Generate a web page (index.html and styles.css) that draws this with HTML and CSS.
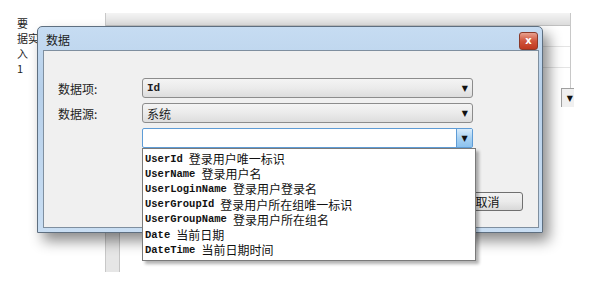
FILE: index.html
```html
<!DOCTYPE html>
<html lang="zh">
<head>
    <meta charset="UTF-8">
    <title>数据</title>
    <link rel="stylesheet" href="styles.css">
</head>
<body>
    <div class="side-text">
        <div>要</div>
        <div>据实</div>
        <div>入</div>
        <div>1</div>
    </div>

    <!-- finestra dietro il dialogo -->
    <div class="bg-window">
        <div class="bg-top">
            <div class="bg-header"></div>
            <div class="bg-row"></div>
            <div class="bg-row"></div>
        </div>
        <div class="bg-combo"><span class="arrow">&#9660;</span></div>
        <div class="bg-strip"></div>
    </div>

    <div class="dialog">
        <div class="title-bar">
            <span class="title">数据</span>
            <span class="close-btn">x</span>
        </div>
        <div class="client">
            <div class="form-row">
                <span class="label">数据项:</span>
                <div class="select"><span class="mono">Id</span><span class="arrow">&#9660;</span></div>
            </div>
            <div class="form-row">
                <span class="label">数据源:</span>
                <div class="select">系统<span class="arrow">&#9660;</span></div>
            </div>
            <div class="form-row">
                <span class="label"></span>
                <div class="combo"><span class="combo-btn"><span class="arrow">&#9660;</span></span></div>
            </div>
            <div class="buttons">
                <button class="btn">确定</button>
                <button class="btn">取消</button>
            </div>

            <ul class="drop-list">
                <li><b>UserId</b><span>登录用户唯一标识</span></li>
                <li><b>UserName</b><span>登录用户名</span></li>
                <li><b>UserLoginName</b><span>登录用户登录名</span></li>
                <li><b>UserGroupId</b><span>登录用户所在组唯一标识</span></li>
                <li><b>UserGroupName</b><span>登录用户所在组名</span></li>
                <li><b>Date</b><span>当前日期</span></li>
                <li><b>DateTime</b><span>当前日期时间</span></li>
            </ul>
        </div>
    </div>
</body>
</html>
```

FILE: styles.css
```css
html, body {
    margin: 0;
    padding: 0;
    background: #ffffff;
    font-family: "Noto Sans CJK SC", "Liberation Sans", sans-serif;
    font-size: 12px;
    color: #1e1e1e;
    overflow: hidden;
    height: 286px;
}

body {
    position: relative;
}

.side-text {
    padding: 16px 0 0 17px;
    font-size: 11px;
}

.side-text div {
    height: 15px;
    line-height: 15px;
}

/* finestra di sfondo */
.bg-window {
    position: absolute;
    left: 105px;
    top: 13px;
    width: 465px;
    height: 259px;
    border-left: 1px solid #c8c8c8;
}

.bg-top {
    border-right: 1px solid #c8c8c8;
    height: 75px;
}

.bg-header {
    height: 12px;
    background: linear-gradient(#f4f4f4, #dcdcdc);
    border-bottom: 1px solid #c0c0c0;
}

.bg-row {
    height: 20px;
    border-bottom: 1px solid #e4e4e4;
}

.bg-combo {
    position: absolute;
    top: 75px;
    left: 455px;
    width: 12px;
    height: 18px;
    border-top: 1px solid #a0a0a0;
    border-left: 1px solid #a0a0a0;
    background: #f0f0f0;
    display: flex;
    justify-content: flex-end;
    align-items: center;
}

.bg-combo .arrow {
    padding-right: 1px;
}

.bg-strip {
    position: absolute;
    left: 0;
    bottom: 0;
    width: 13px;
    height: 60px;
    background: #e6e6e6;
    border-right: 1px solid #c4c4c4;
}

/* dialogo */
.dialog {
    position: absolute;
    left: 37px;
    top: 26px;
    width: 504px;
    height: 205px;
    border: 1px solid #5e6f80;
    border-radius: 5px 5px 0 0;
    background: linear-gradient(#c6dcf2, #b7d0ea 30%, #c9def3);
    box-shadow: 6px 8px 14px rgba(0, 0, 0, 0.45);
    display: flex;
    flex-direction: column;
}

.title-bar {
    height: 23px;
    display: flex;
    align-items: center;
    justify-content: space-between;
    padding: 0 4px 0 8px;
}

.title {
    font-size: 12px;
    color: #1b1b1b;
    padding-top: 1px;
}

.close-btn {
    width: 17px;
    height: 16px;
    margin-top: 4px;
    border: 1px solid #8a3a2a;
    border-radius: 3px;
    background: linear-gradient(#e8a18e, #d0553c 50%, #c0381f);
    color: #ffffff;
    font-family: "DejaVu Sans", sans-serif;
    font-weight: bold;
    font-size: 10px;
    display: flex;
    justify-content: center;
    align-items: center;
    line-height: 1;
}

.client {
    flex: 1;
    margin: 0 3px 4px 5px;
    border: 1px solid #7f8f9f;
    background: #f0f0f0;
    position: relative;
    padding-top: 27px;
}

.form-row {
    display: flex;
    align-items: center;
    height: 20px;
    margin-bottom: 5px;
}

.label {
    width: 84px;
    padding-left: 14px;
}

.select, .combo {
    height: 18px;
    border: 1px solid #8c8c8c;
    border-radius: 3px;
    background: linear-gradient(#f4f4f4, #ebebeb 50%, #dddddd);
    display: flex;
    align-items: center;
    justify-content: space-between;
    padding-left: 4px;
    width: 325px;
}

.combo {
    background: #ffffff;
    border-color: #5e9cd6;
    border-radius: 2px;
    padding-left: 0;
    width: 329px;
    justify-content: flex-end;
}

.combo-btn {
    width: 15px;
    height: 18px;
    background: linear-gradient(#d9ecfb, #a9d2f3 50%, #8cc2ee);
    border-left: 1px solid #5e9cd6;
    display: flex;
    justify-content: center;
    align-items: center;
}

.mono {
    font-family: "Liberation Mono", monospace;
    font-weight: bold;
    font-size: 11px;
}

.arrow {
    font-size: 8px;
    color: #111111;
    padding-right: 4px;
    font-family: "DejaVu Sans", sans-serif;
}

.combo-btn .arrow {
    padding-right: 0;
}

.buttons {
    display: flex;
    justify-content: flex-end;
    gap: 8px;
    margin-top: 44px;
    padding-right: 15px;
}

.btn {
    width: 71px;
    height: 19px;
    border: 1px solid #707070;
    border-radius: 3px;
    background: linear-gradient(#f2f2f2, #ebebeb 50%, #d8d8d8);
    font-family: "Noto Sans CJK SC", sans-serif;
    font-size: 12px;
    padding: 0;
    line-height: 17px;
    color: #111111;
}

/* lista a tendina */
.drop-list {
    position: absolute;
    left: 98px;
    top: 97px;
    width: 330px;
    margin: 0;
    padding: 2px 0 3px 2px;
    list-style: none;
    background: #ffffff;
    border: 1px solid #7a7a7a;
    box-shadow: 3px 3px 3px rgba(0, 0, 0, 0.3);
}

.drop-list li {
    height: 15.2px;
    display: flex;
    align-items: center;
    gap: 6px;
    white-space: nowrap;
    color: #111111;
}

.drop-list b {
    font-family: "Liberation Mono", monospace;
    font-size: 10.5px;
    font-weight: bold;
}
```
